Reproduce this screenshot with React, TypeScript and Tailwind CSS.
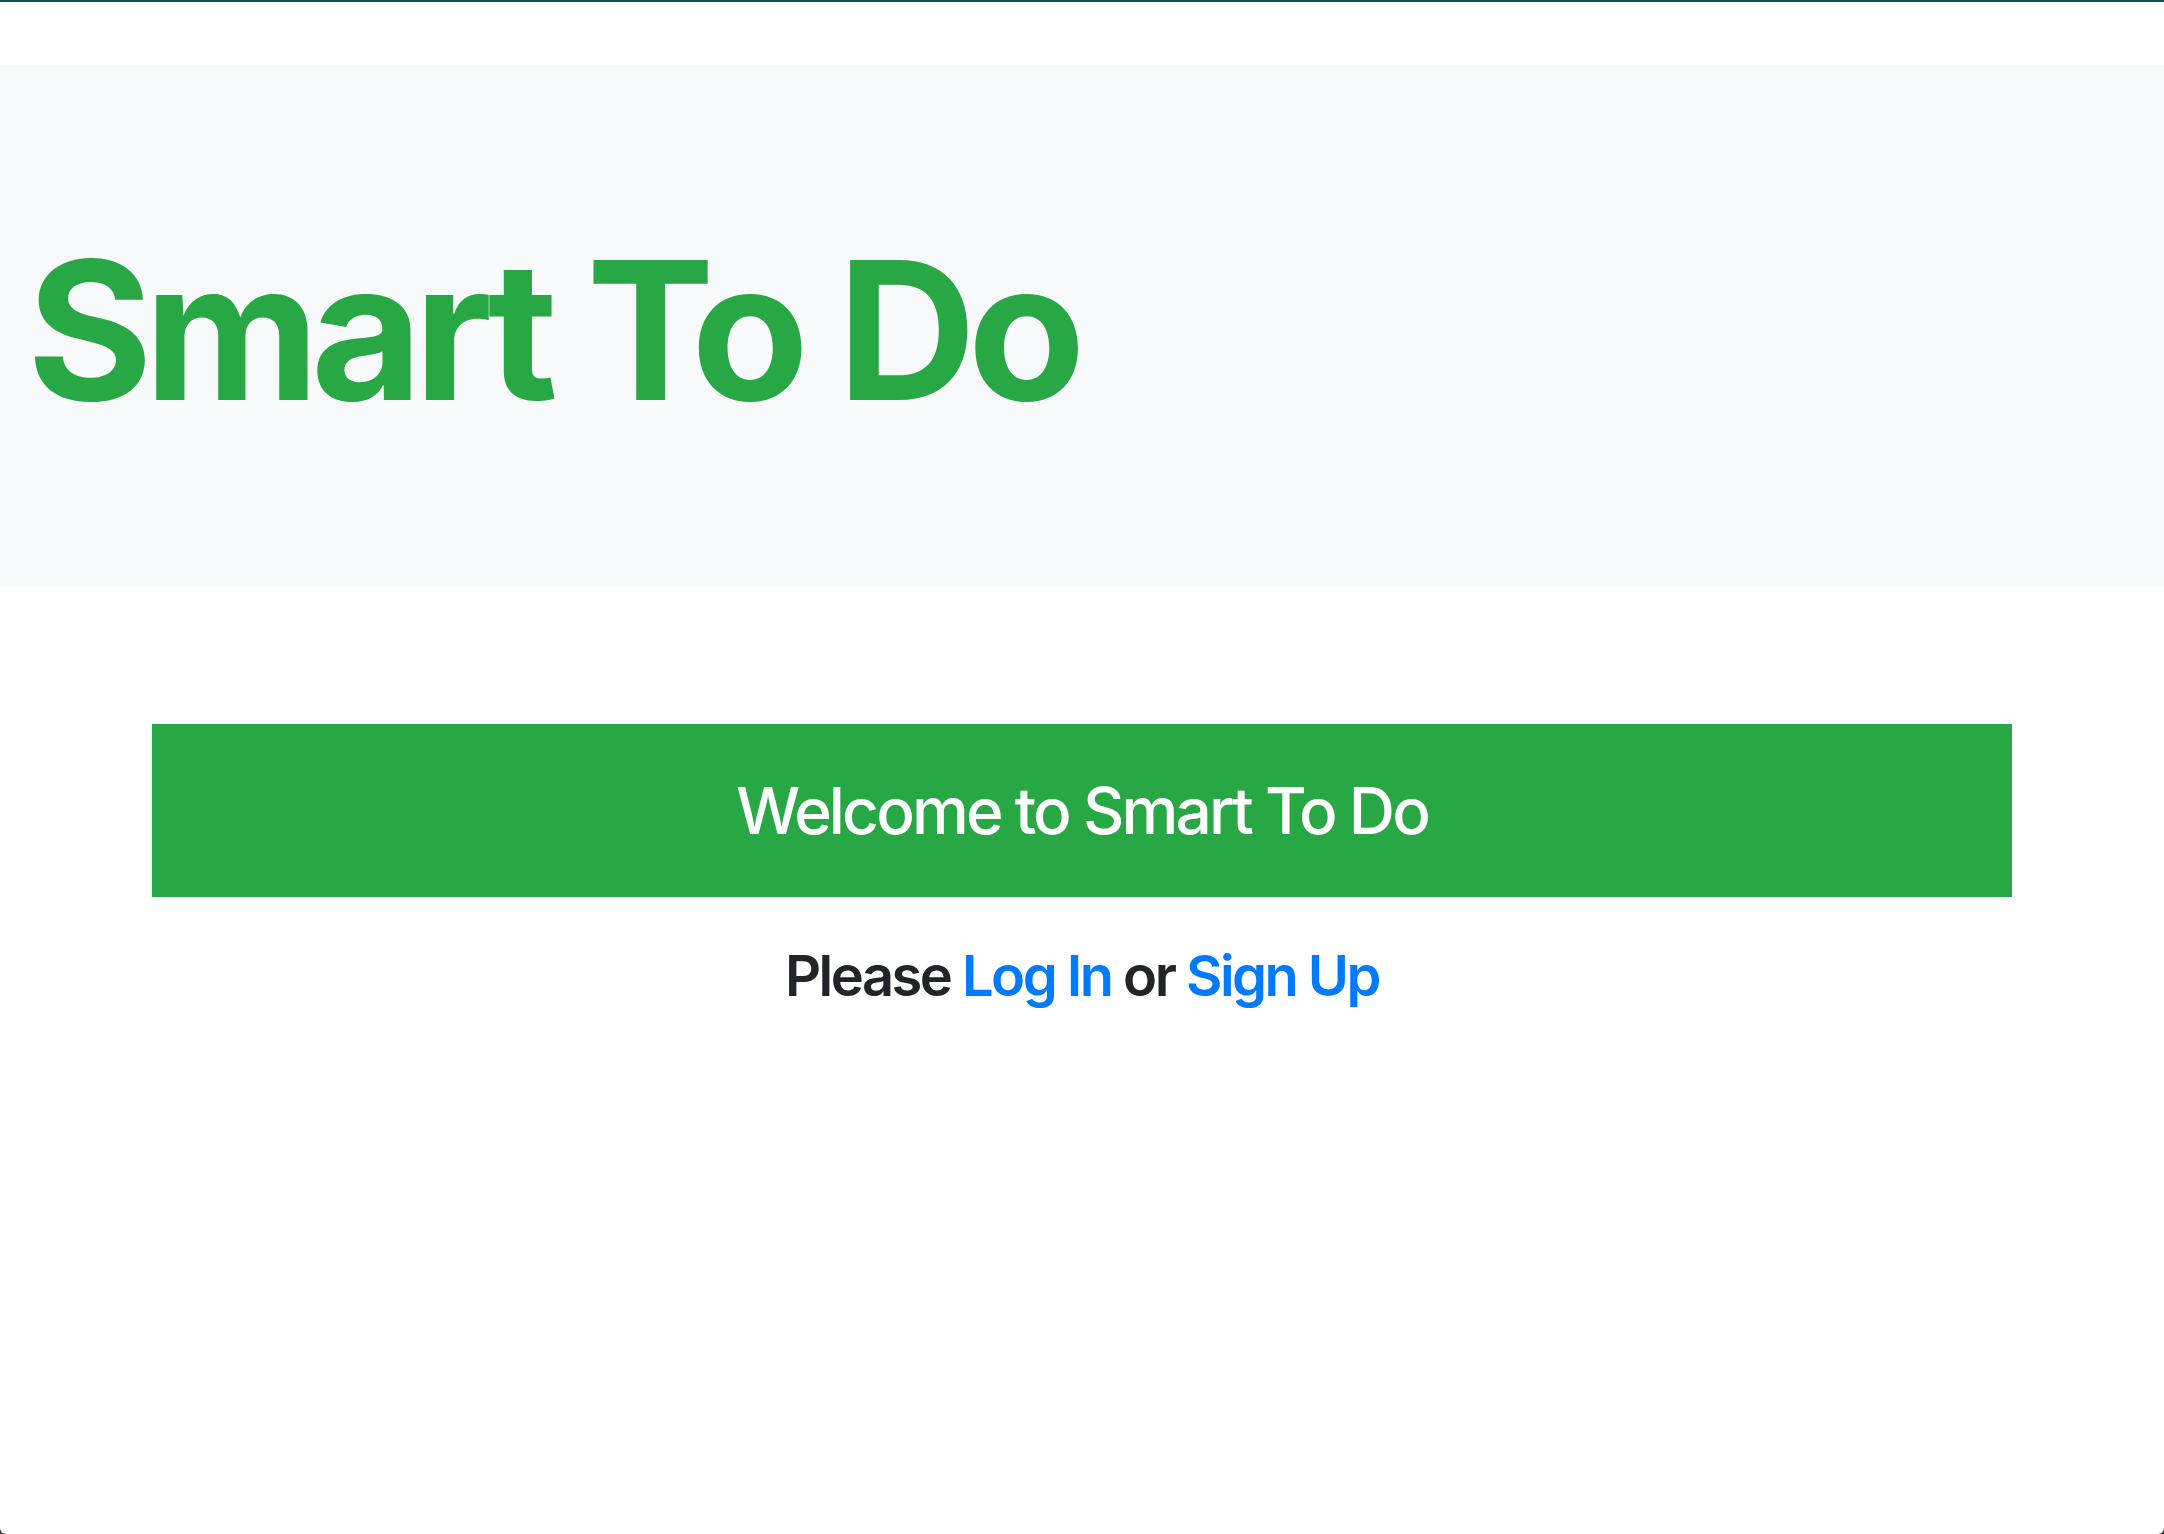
import React from "react";

export default function App() {
  return (
    <div className="h-[1534px] w-full bg-[#3a3a3a]">
      <div
        className="flex h-full w-full flex-col overflow-hidden rounded-b-[6px] bg-white"
        style={{ fontFamily: "Inter, 'Noto Sans', 'Liberation Sans', sans-serif" }}
      >
        <div className="h-[2px] w-full shrink-0 bg-[#0d4f5a]" />
        <div className="mt-[63px] flex h-[522px] shrink-0 flex-col bg-[#f8f9fa] pl-[27px] pt-[150px]">
          <h1 className="text-[192px] font-bold leading-[230px] tracking-[-0.044em] text-[#28a745]">
            Smart To Do
          </h1>
        </div>
        <div className="mx-[152px] mt-[137px] flex h-[173px] items-center justify-center bg-[#28a745]">
          <h2 className="text-[64px] font-medium leading-[77px] tracking-[-0.045em] text-white">
            Welcome to Smart To Do
          </h2>
        </div>
        <h3 className="mt-[46px] text-center text-[56px] font-semibold leading-[67px] tracking-[-0.045em] text-[#212529]">
          Please{" "}
          <a href="#" className="text-[#007bff]">
            Log In
          </a>{" "}
          or{" "}
          <a href="#" className="text-[#007bff]">
            Sign Up
          </a>
        </h3>
      </div>
    </div>
  );
}
